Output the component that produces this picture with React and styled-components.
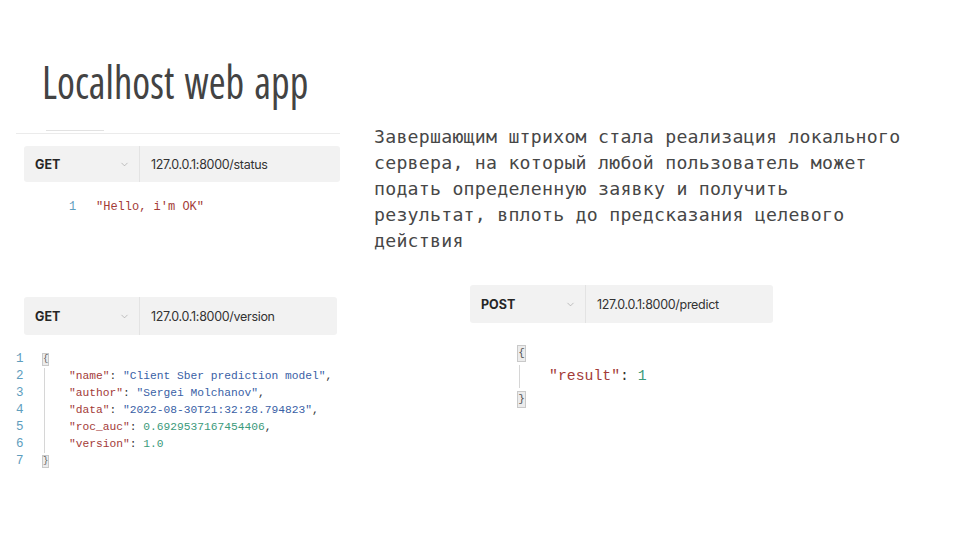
import styled, { createGlobalStyle } from "styled-components";
import { ChevronDown } from "lucide-react";

const GlobalStyle = createGlobalStyle`
  html, body {
    margin: 0;
    padding: 0;
    background: #fff;
  }
`;

const Slide = styled.div`
  width: 960px;
  height: 540px;
  overflow: hidden;
  background: #fff;
  font-family: "Liberation Sans", sans-serif;
`;

const Title = styled.h1`
  margin: 0;
  padding: 53px 0 0 42px;
  height: 71px;
  box-sizing: content-box;
  font-family: "Open Sans", "DejaVu Sans", sans-serif;
  font-stretch: 75%;
  font-weight: 500;
  font-size: 46px;
  line-height: 56px;
  color: #434343;
`;

const TitleText = styled.span`
  display: inline-block;
  transform: scaleX(0.885);
  transform-origin: left center;
  word-spacing: 3px;
`;

const Body = styled.div`
  display: flex;
`;

const LeftCol = styled.div`
  width: 324px;
  margin-left: 16px;
  padding-top: 4px;
  display: flex;
  flex-direction: column;
`;

const RightCol = styled.div`
  margin-left: 34px;
  display: flex;
  flex-direction: column;
`;

const TabRule = styled.div`
  height: 5px;
  border-bottom: 1px solid #ebebeb;
  position: relative;
  &::before {
    content: "";
    position: absolute;
    left: 30px;
    width: 58px;
    top: 2px;
    height: 1px;
    background: #e2e2e2;
  }
`;

const Bar = styled.div`
  display: flex;
  align-items: stretch;
  height: ${(p) => p.$h || 36}px;
  width: ${(p) => p.$w || 316}px;
  margin: ${(p) => p.$m || "0"};
  background: #f2f2f2;
  border-radius: 3px;
  font-family: Inter, "Noto Sans", sans-serif;
`;

const Method = styled.div`
  width: 116px;
  box-sizing: border-box;
  padding: 0 9px 0 11px;
  display: flex;
  align-items: center;
  justify-content: space-between;
  border-right: 1px solid #e3e3e3;
  font-size: 12.5px;
  font-weight: 700;
  color: #262626;
  svg {
    color: #a0a0a0;
  }
`;

const Url = styled.div`
  display: flex;
  align-items: center;
  padding-left: 11px;
  font-size: 12.5px;
  letter-spacing: -0.3px;
  color: #333;
`;

const Code = styled.div`
  --lh: ${(p) => p.$lh}px;
  font-family: "Liberation Mono", "DejaVu Sans Mono", monospace;
  font-size: ${(p) => p.$size}px;
  line-height: var(--lh);
  margin: ${(p) => p.$m};
  white-space: pre;
`;

const Line = styled.div`
  display: flex;
  align-items: center;
  min-height: var(--lh);
`;

const Num = styled.span`
  width: ${(p) => p.$w}px;
  margin-left: ${(p) => p.$x || 0}px;
  font-size: ${(p) => (p.$fs ? `${p.$fs}px` : "inherit")};
  color: #5e9dbd;
`;

const Guide = styled.div`
  margin-left: ${(p) => p.$x}px;
  padding-left: ${(p) => p.$indent}px;
  border-left: 1px solid #d6d6d6;
`;

const GuideRow = styled.div`
  display: flex;
`;

const Brace = styled.span`
  display: inline-block;
  margin-left: ${(p) => p.$x}px;
  width: ${(p) => p.$bw}px;
  height: ${(p) => p.$bh}px;
  background: #ececec;
  border: 1px solid #c9c9c9;
  box-sizing: border-box;
  font-size: ${(p) => p.$fs}px;
  line-height: ${(p) => p.$bh - 2}px;
  text-align: center;
  color: #555;
`;

const Key = styled.span`
  color: #a33b38;
`;
const Str = styled.span`
  color: #3a5fa6;
`;
const NumVal = styled.span`
  color: #3b9a7b;
`;
const Punct = styled.span`
  color: #333;
`;

const Para = styled.p`
  margin: 0;
  font-family: "DejaVu Sans Mono", "Liberation Mono", monospace;
  font-size: 18.2px;
  letter-spacing: 0.25px;
  line-height: 26px;
  color: #474747;
  white-space: pre;
`;

function RequestBar({ method, url, h, w, m }) {
  return (
    <Bar $h={h} $w={w} $m={m}>
      <Method>
        <span>{method}</span>
        <ChevronDown size={11} strokeWidth={1.4} />
      </Method>
      <Url>{url}</Url>
    </Bar>
  );
}

const versionRows = [
  ["name", <Str>"Client Sber prediction model"</Str>, true],
  ["author", <Str>"Sergei Molchanov"</Str>, true],
  ["data", <Str>"2022-08-30T21:32:28.794823"</Str>, true],
  ["roc_auc", <NumVal>0.6929537167454406</NumVal>, true],
  ["version", <NumVal>1.0</NumVal>, false],
];

export default function App() {
  return (
    <Slide>
      <GlobalStyle />
      <Title>
        <TitleText>Localhost web app</TitleText>
      </Title>
      <Body>
        <LeftCol>
          <TabRule />
          <RequestBar method="GET" url="127.0.0.1:8000/status" m="12px 0 0 8px" />
          <Code $size={12} $lh={17} $m="17px 0 0 0">
            <Line>
              <Num $w={27} $x={53}>1</Num>
              <Key>"Hello, i'm OK"</Key>
            </Line>
          </Code>

          <RequestBar method="GET" url="127.0.0.1:8000/version" h={38} w={313} m="81px 0 0 8px" />
          <Code $size={11.25} $lh={17} $m="16px 0 0 0">
            <GuideRow>
              <div>
                {[1, 2, 3, 4, 5, 6, 7].map((n) => (
                  <Line key={n}>
                    <Num $w={26} $fs={12.5}>{n}</Num>
                  </Line>
                ))}
              </div>
              <div>
                <Line>
                  <Brace $x={0} $bw={7} $bh={13} $fs={9}>{"{"}</Brace>
                </Line>
                <Guide $x={2} $indent={24}>
                  {versionRows.map(([k, v, comma]) => (
                    <Line key={k}>
                      <Key>"{k}"</Key>
                      <Punct>: </Punct>
                      {v}
                      {comma && <Punct>,</Punct>}
                    </Line>
                  ))}
                </Guide>
                <Line>
                  <Brace $x={0} $bw={7} $bh={13} $fs={9}>{"}"}</Brace>
                </Line>
              </div>
            </GuideRow>
          </Code>
        </LeftCol>

        <RightCol>
          <Para>
            {"Завершающим штрихом стала реализация локального\nсервера, на который любой пользователь может\nподать определенную заявку и получить\nрезультат, вплоть до предсказания целевого\nдействия"}
          </Para>
          <RequestBar method="POST" url="127.0.0.1:8000/predict" h={38} w={303} m="31px 0 0 96px" />
          <Code $size={14.8} $lh={23} $m="19px 0 0 139px">
            <Line>
              <Brace $x={4} $bw={9} $bh={17} $fs={11}>{"{"}</Brace>
            </Line>
            <Guide $x={6} $indent={29}>
              <Line>
                <Key>"result"</Key>
                <Punct>: </Punct>
                <NumVal>1</NumVal>
              </Line>
            </Guide>
            <Line>
              <Brace $x={4} $bw={9} $bh={17} $fs={11}>{"}"}</Brace>
            </Line>
          </Code>
        </RightCol>
      </Body>
    </Slide>
  );
}
